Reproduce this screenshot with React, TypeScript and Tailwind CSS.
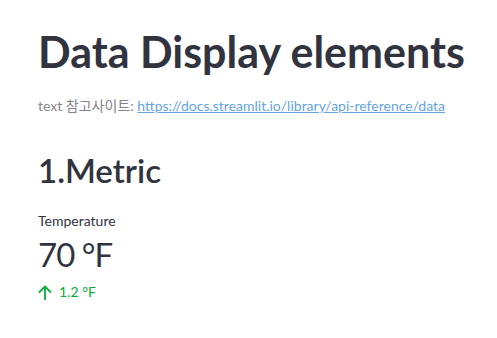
export default function App() {
  return (
    <div
      className="min-h-screen bg-white text-[#31333f] pl-[38px] pt-[26px] leading-[1.2]"
      style={{ fontFamily: 'Lato, "Noto Sans CJK KR", sans-serif' }}
    >
      <h1 className="text-[43px] font-bold whitespace-nowrap">Data Display elements</h1>

      <p className="mt-[20px] text-[14px] text-[#83858c] whitespace-nowrap">
        text 참고사이트:{' '}
        <a href="#" className="text-[#66a4df] underline">
          https://docs.streamlit.io/library/api-reference/data
        </a>
      </p>

      <h2 className="mt-[37px] text-[33px] font-semibold">1.Metric</h2>

      <div className="mt-[22px]">
        <div className="text-[14px]">Temperature</div>
        <div className="mt-[5px] text-[33px] tracking-[-1px]">70 °F</div>
        <div className="mt-[10px] flex items-center gap-[7px] text-[14px] text-[#09ab3b]">
          <svg width="14" height="15" viewBox="0 0 14 15" fill="none" stroke="currentColor" strokeWidth="1.8">
            <path d="M7 15V1.5M1 7.5l6-6 6 6" />
          </svg>
          <span>1.2 °F</span>
        </div>
      </div>
    </div>
  );
}
